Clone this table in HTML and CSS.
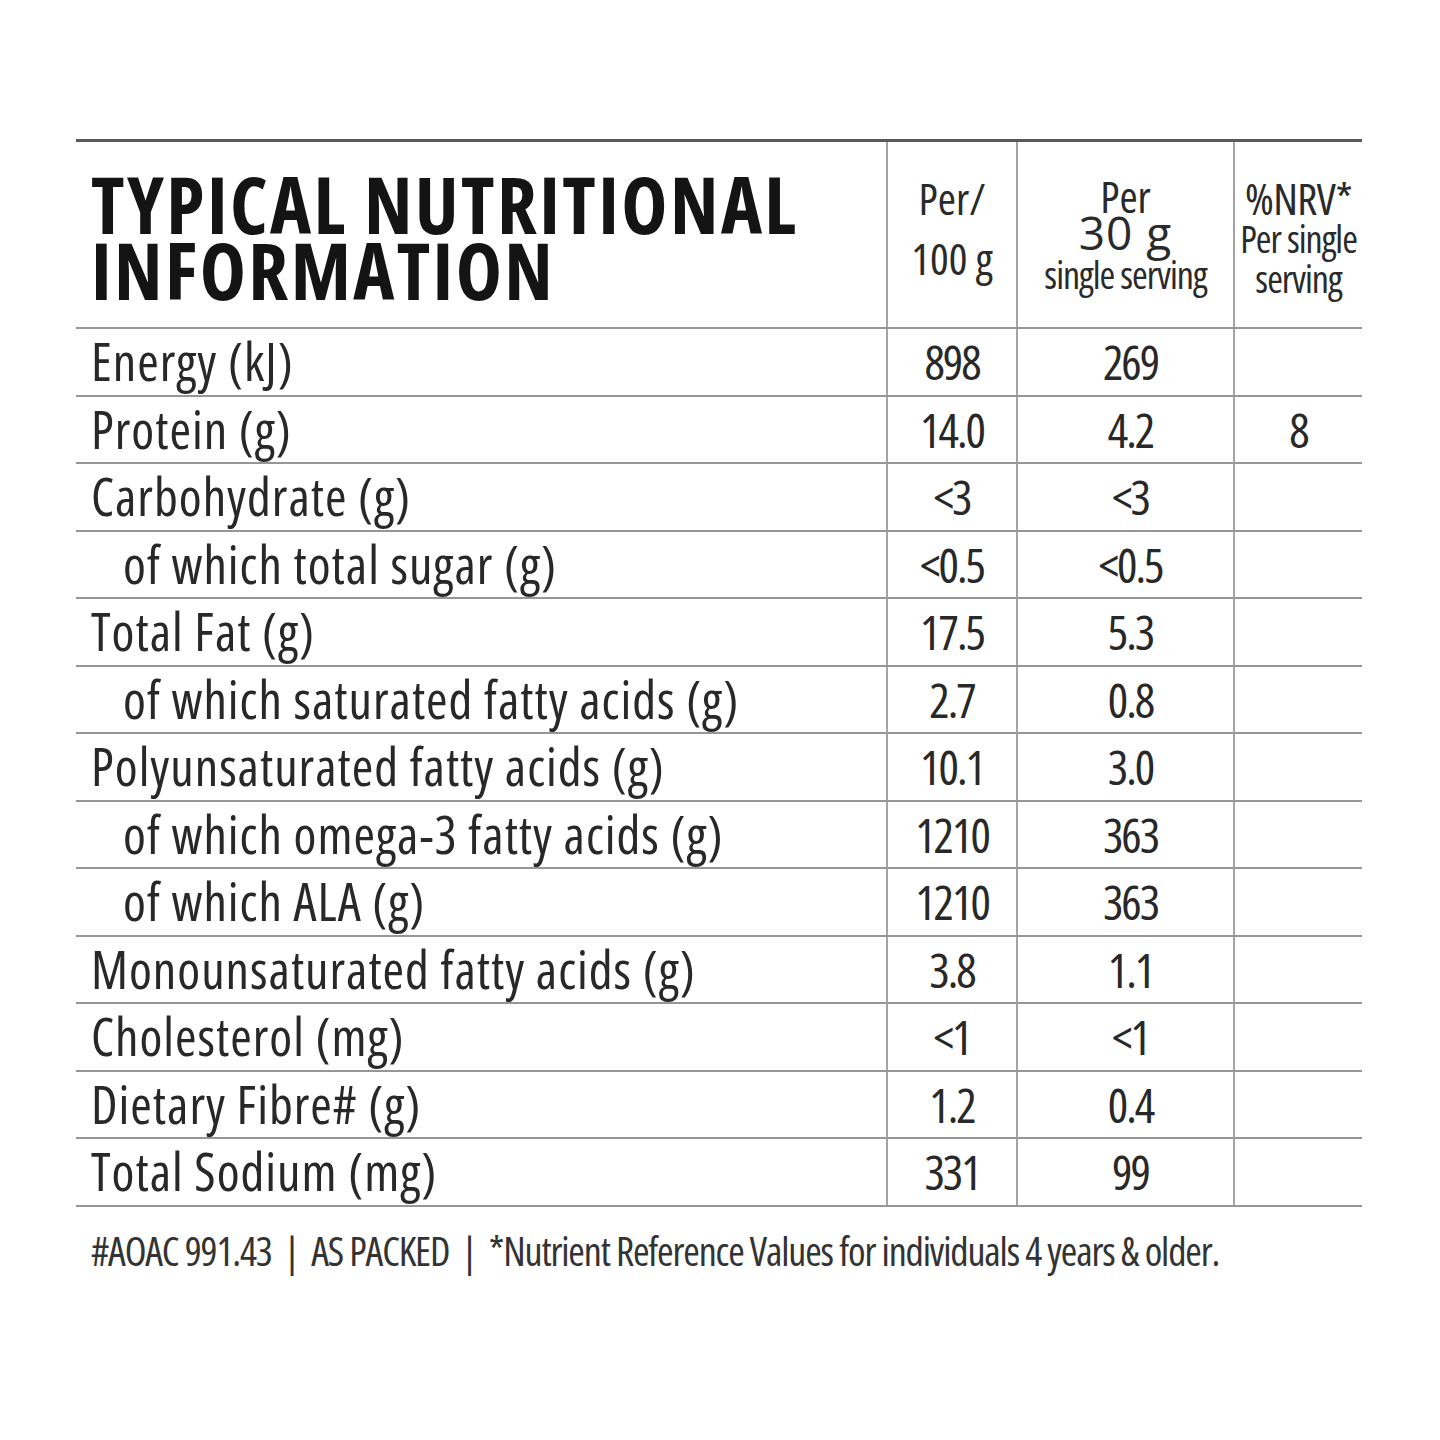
FILE: index.html
```html
<!DOCTYPE html>
<html>
<head>
<meta charset="utf-8">
<link rel="stylesheet" href="styles.css">
</head>
<body>
<div class="panel">
  <div class="table">
    <div class="row head">
      <div class="title">TYPICAL NUTRITIONAL<br>INFORMATION</div>
      <div class="hcell"><span class="h1">Per/</span><span class="h1">100 g</span></div>
      <div class="hcell"><span class="h1">Per</span><span class="h30">30 g</span><span class="hs">single serving</span></div>
      <div class="hcell"><span class="hn">%NRV*</span><span class="hs">Per single</span><span class="hs">serving</span></div>
    </div>
    <div class="row"><div class="label">Energy (kJ)</div><div class="val">898</div><div class="val">269</div><div class="val"></div></div>
    <div class="row"><div class="label">Protein (g)</div><div class="val">14.0</div><div class="val">4.2</div><div class="val">8</div></div>
    <div class="row"><div class="label">Carbohydrate (g)</div><div class="val">&lt;3</div><div class="val">&lt;3</div><div class="val"></div></div>
    <div class="row"><div class="label sub">of which total sugar (g)</div><div class="val">&lt;0.5</div><div class="val">&lt;0.5</div><div class="val"></div></div>
    <div class="row"><div class="label">Total Fat (g)</div><div class="val">17.5</div><div class="val">5.3</div><div class="val"></div></div>
    <div class="row"><div class="label sub">of which saturated fatty acids (g)</div><div class="val">2.7</div><div class="val">0.8</div><div class="val"></div></div>
    <div class="row"><div class="label">Polyunsaturated fatty acids (g)</div><div class="val">10.1</div><div class="val">3.0</div><div class="val"></div></div>
    <div class="row"><div class="label sub">of which omega-3 fatty acids (g)</div><div class="val">1210</div><div class="val">363</div><div class="val"></div></div>
    <div class="row"><div class="label sub">of which ALA (g)</div><div class="val">1210</div><div class="val">363</div><div class="val"></div></div>
    <div class="row"><div class="label">Monounsaturated fatty acids (g)</div><div class="val">3.8</div><div class="val">1.1</div><div class="val"></div></div>
    <div class="row"><div class="label">Cholesterol (mg)</div><div class="val">&lt;1</div><div class="val">&lt;1</div><div class="val"></div></div>
    <div class="row"><div class="label">Dietary Fibre# (g)</div><div class="val">1.2</div><div class="val">0.4</div><div class="val"></div></div>
    <div class="row"><div class="label">Total Sodium (mg)</div><div class="val">331</div><div class="val">99</div><div class="val"></div></div>
  </div>
  <p class="foot">#AOAC 991.43 <span class="bar">|</span> AS PACKED <span class="bar">|</span> *Nutrient Reference Values for individuals 4 years &amp; older.</p>
</div>
</body>
</html>
```
FILE: styles.css
```css
html, body {
  margin: 0;
  padding: 0;
  background: #ffffff;
}
body {
  width: 1440px;
  height: 1440px;
  font-family: "Open Sans", "Liberation Sans", sans-serif;
  color: #262626;
}
.panel {
  padding: 139px 0 0 76px;
}
.table {
  width: 1286px;
  border-top: 3px solid #5a5a5a;
}
.row {
  display: grid;
  grid-template-columns: 810px 130px 217px 129px;
  height: 67.5px;
  border-bottom: 2px solid #969696;
  box-sizing: border-box;
}
.row.head {
  height: 187px;
}
.title {
  font-family: "Open Sans", sans-serif;
  font-weight: 700;
  font-stretch: 75%;
  font-size: 78px;
  line-height: 66px;
  letter-spacing: 2.4px;
  color: #141414;
  padding: 29px 0 0 15px;
  white-space: nowrap;
}
.hcell {
  border-left: 2px solid #a4a4a4;
  display: flex;
  flex-direction: column;
  align-items: center;
  padding-top: 36px;
  font-stretch: 75%;
  color: #2a2a2a;
}
.h1 {
  font-size: 44px;
  line-height: 40px;
  height: 40px;
  margin-bottom: 20px;
}
.hcell .h1 + .h1 {
  margin-bottom: 0;
}
.hcell:nth-child(3) .h1 {
  margin-bottom: 0;
  line-height: 36px;
  height: 34px;
}
.h30 {
  font-size: 46px;
  line-height: 40px;
  height: 40px;
  font-stretch: 100%;
  letter-spacing: 1px;
}
.hs {
  font-size: 38px;
  line-height: 40px;
  height: 40px;
  letter-spacing: -1px;
  white-space: nowrap;
}
.hcell:nth-child(3) .hs {
  margin-top: 2px;
}
.hn {
  font-size: 44px;
  line-height: 40px;
  height: 40px;
  letter-spacing: -0.5px;
}
.label {
  font-size: 52px;
  font-stretch: 87.5%;
  letter-spacing: 1px;
  line-height: 64px;
  padding-left: 15px;
  white-space: nowrap;
  color: #282828;
}
.label.sub {
  padding-left: 47px;
}
.val {
  border-left: 2px solid #a4a4a4;
  text-align: center;
  font-size: 48px;
  font-stretch: 75%;
  letter-spacing: -2px;
  line-height: 66px;
  color: #282828;
}
.row .val:nth-child(3) {
  padding-left: 10px;
}
.foot {
  margin: 16px 0 0 15px;
  font-size: 40px;
  font-stretch: 75%;
  letter-spacing: -1.15px;
  color: #333333;
  white-space: nowrap;
}
.bar {
  padding: 0 6px;
}
```
